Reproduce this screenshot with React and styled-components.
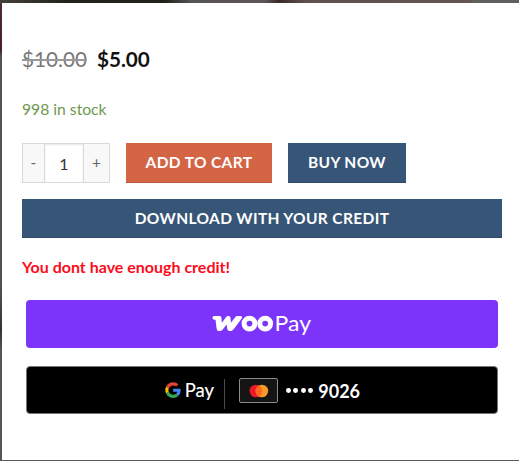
import React from "react";
import styled, { createGlobalStyle } from "styled-components";

const GlobalStyle = createGlobalStyle`
  *, *::before, *::after { box-sizing: border-box; }
  body { margin: 0; font-family: Lato, "Open Sans", sans-serif; overflow: hidden; }
  button { font-family: inherit; margin: 0; padding: 0; border: 0; }
`;

const Backdrop = styled.div`
  width: 519px;
  height: 461px;
  padding: 3px 0 1px 2px;
  background:
    linear-gradient(90deg, #45403a 0, #23231e 65px, #20211b 165px, #565354 190px, #5d5656 265px, #3b2929 279px, #5c5150 305px, #625653 470px, #606060 475px) 0 0 / 519px 3px no-repeat,
    linear-gradient(#4b2c3b 0, #4a2029 50px, #555 57px, #505050 290px, #303633 330px, #555 350px, #555 461px) 0 0 / 2px 461px no-repeat,
    #5e5a5b;
`;

const Panel = styled.main`
  height: 457px;
  padding: 42px 17px 0 20px;
  background: #fff;
`;

const Price = styled.div`
  display: flex;
  align-items: center;
  gap: 10px;
  height: 28px;
  font-size: 20.7px;
  line-height: 28px;
  white-space: nowrap;
`;

const OldPrice = styled.del`
  color: #777;
  text-decoration: line-through;
  text-decoration-color: #999;
  text-decoration-thickness: 1.5px;
`;

const SalePrice = styled.ins`
  color: #111;
  font-weight: 700;
  text-decoration: none;
`;

const Stock = styled.p`
  margin: 24px 0 21px;
  height: 25px;
  font-size: 15.7px;
  line-height: 25px;
  color: #6f9751;
`;

const CartRow = styled.div`
  display: flex;
  height: 40px;
  gap: 16px;
`;

const Quantity = styled.div`
  display: grid;
  grid-template-columns: 21px 40px 25px;
  width: 88px;
  border: 1px solid #d9d9d9;
`;

const Step = styled.button`
  background: #f8f8f8;
  color: #666;
  font-size: 15.5px;
  line-height: 35px;
  padding-bottom: 2px;
`;

const Count = styled.div`
  height: 38px;
  border: solid #d9d9d9;
  border-width: 0 1px;
  box-shadow: inset 0 1px 2px rgba(0, 0, 0, 0.1);
  color: #333;
  font-size: 16px;
  line-height: 39px;
  text-align: center;
`;

const Action = styled.button`
  width: ${({ $width }) => $width};
  height: ${({ $height }) => $height || "40px"};
  background: ${({ $color }) => $color};
  box-shadow: inset 0 -1px 0 rgba(0, 0, 0, 0.1);
  color: #fff;
  font-size: 15.5px;
  font-weight: 700;
  letter-spacing: 0.36px;
  line-height: 37px;
  padding-bottom: 1px;
  text-align: center;
  white-space: nowrap;
`;

const DownloadRow = styled.div`
  display: flex;
  margin-top: 16px;
`;

const Warning = styled.p`
  margin: 16px 0 21px;
  height: 25px;
  color: #fb0d1b;
  font-size: 16px;
  font-weight: 700;
  line-height: 25px;
`;

const Wallets = styled.div`
  display: grid;
  gap: 18px;
  padding: 0 4px;
`;

const WalletButton = styled.button`
  display: flex;
  align-items: center;
  justify-content: center;
  height: 48px;
  border-radius: 4px;
  background: ${({ $color }) => $color};
  border: ${({ $outlined }) => ($outlined ? "1px solid #747775" : "0")};
  color: #fff;
`;

const GoogleContent = styled.div`
  display: flex;
  align-items: center;
  width: 198px;
  height: 32px;
  padding-top: 1px;

  > * { flex-shrink: 0; }
`;

const Separator = styled.span`
  width: 1px;
  height: 30px;
  margin: 6px 14px 0 9px;
  background: #4b4c50;
`;

const CardFrame = styled.span`
  display: flex;
  align-items: center;
  justify-content: center;
  width: 39px;
  height: 25px;
  border: 1px solid #8a8a8a;
  border-radius: 2px;
  background: #151515;
`;

const Dots = styled.span`
  display: flex;
  gap: 2.7px;
  margin: 0 5px 0 8px;
`;

const Dot = styled.i`
  width: 4.8px;
  height: 4.8px;
  border-radius: 50%;
  background: #fff;
`;

const CardDigits = styled.span`
  font-size: 18px;
  font-weight: 700;
  line-height: 24px;
`;

function WooPayLogo() {
  return (
    <svg width="100" height="26" viewBox="212 312 100 26" fill="none" overflow="visible" aria-label="WooPay">
      <g transform="translate(.8 0)">
        <path d="M213.4 317h5.2c1.6 0 2 .9 2.1 2.2l.4 4.6 4-5.5c.7-1 1.4-1.3 2.5-1.3 1.4 0 2 .7 2.1 2l.4 4.8 4.1-5.3c.8-1.1 1.6-1.5 3-1.5h2.2c1.8 0 2.3 1.4 1.3 2.8l-7.5 10c-1.2 1.6-2.3 2.3-3.8 2.3-1.8 0-2.7-1-3-2.7l-.6-3.8-3.4 4.4c-1.2 1.5-2.3 2.1-3.7 2.1-1.8 0-2.7-1-2.9-2.6l-1.1-8.8h-1.3c-2 0-2.4-3.7 0-3.7z" fill="#fff" />
        <ellipse cx="248.7" cy="324.6" rx="5.4" ry="5.3" stroke="#fff" strokeWidth="5" />
        <ellipse cx="264.4" cy="324.6" rx="5.4" ry="5.3" stroke="#fff" strokeWidth="5" />
      </g>
      <text x="274.6" y="332.2" fill="#fff" fontFamily="Lato" fontSize="20.5" textLength="36.4" lengthAdjust="spacingAndGlyphs">Pay</text>
    </svg>
  );
}

function GooglePayLogo() {
  return (
    <svg width="52" height="26" viewBox="163 378 52 26" overflow="visible" aria-label="Google Pay">
      <g transform="translate(165.3 382.3) scale(.326)">
        <path fill="#EA4335" d="M24 9.5c3.54 0 6.71 1.22 9.21 3.6l6.85-6.85C35.9 2.38 30.47 0 24 0 14.62 0 6.51 5.38 2.56 13.22l7.98 6.19C12.43 13.72 17.74 9.5 24 9.5z" />
        <path fill="#4285F4" d="M46.98 24.55c0-1.57-.15-3.09-.38-4.55H24v9.02h12.94c-.58 2.96-2.26 5.48-4.78 7.18l7.73 6c4.51-4.18 7.09-10.36 7.09-17.65z" />
        <path fill="#FBBC05" d="M10.53 28.59A14.5 14.5 0 0 1 9.77 24c0-1.6.27-3.14.76-4.59l-7.98-6.19A24 24 0 0 0 0 24c0 3.88.92 7.54 2.56 10.78z" />
        <path fill="#34A853" d="M24 48c6.48 0 11.93-2.13 15.89-5.81l-7.73-6C30.01 37.64 27.24 38.49 24 38.49c-6.26 0-11.57-4.22-13.47-9.91l-7.98 6.19C6.51 42.62 14.62 48 24 48z" />
      </g>
      <text x="184.7" y="397.3" fill="#fff" stroke="#fff" strokeWidth=".15" fontFamily="Lato" fontSize="19.5" textLength="29.3" lengthAdjust="spacingAndGlyphs">Pay</text>
    </svg>
  );
}

function Mastercard() {
  return (
    <svg width="20" height="14" viewBox="0 0 20 14" aria-label="Mastercard">
      <circle cx="6.8" cy="7" r="6.3" fill="#eb1927" />
      <circle cx="12.9" cy="7" r="6.3" fill="#f99a28" />
      <path d="M9.85 1.5a6.3 6.3 0 0 1 0 11a6.3 6.3 0 0 1 0-11z" fill="#ff6420" />
    </svg>
  );
}

export default function App() {
  return (
    <>
      <GlobalStyle />
      <Backdrop>
        <Panel>
          <Price><OldPrice>$10.00</OldPrice><SalePrice>$5.00</SalePrice></Price>
          <Stock>998 in stock</Stock>
          <CartRow>
            <Quantity><Step>-</Step><Count>1</Count><Step>+</Step></Quantity>
            <Action $width="146px" $color="#d36545">ADD TO CART</Action>
            <Action $width="118px" $color="#375577">BUY NOW</Action>
          </CartRow>
          <DownloadRow>
            <Action $width="480px" $height="39px" $color="#375577">DOWNLOAD WITH YOUR CREDIT</Action>
          </DownloadRow>
          <Warning>You dont have enough credit!</Warning>
          <Wallets>
            <WalletButton $color="#7c34fb"><WooPayLogo /></WalletButton>
            <WalletButton $color="#000" $outlined>
              <GoogleContent>
                <GooglePayLogo />
                <Separator />
                <CardFrame><Mastercard /></CardFrame>
                <Dots><Dot /><Dot /><Dot /><Dot /></Dots>
                <CardDigits>9026</CardDigits>
              </GoogleContent>
            </WalletButton>
          </Wallets>
        </Panel>
      </Backdrop>
    </>
  );
}
